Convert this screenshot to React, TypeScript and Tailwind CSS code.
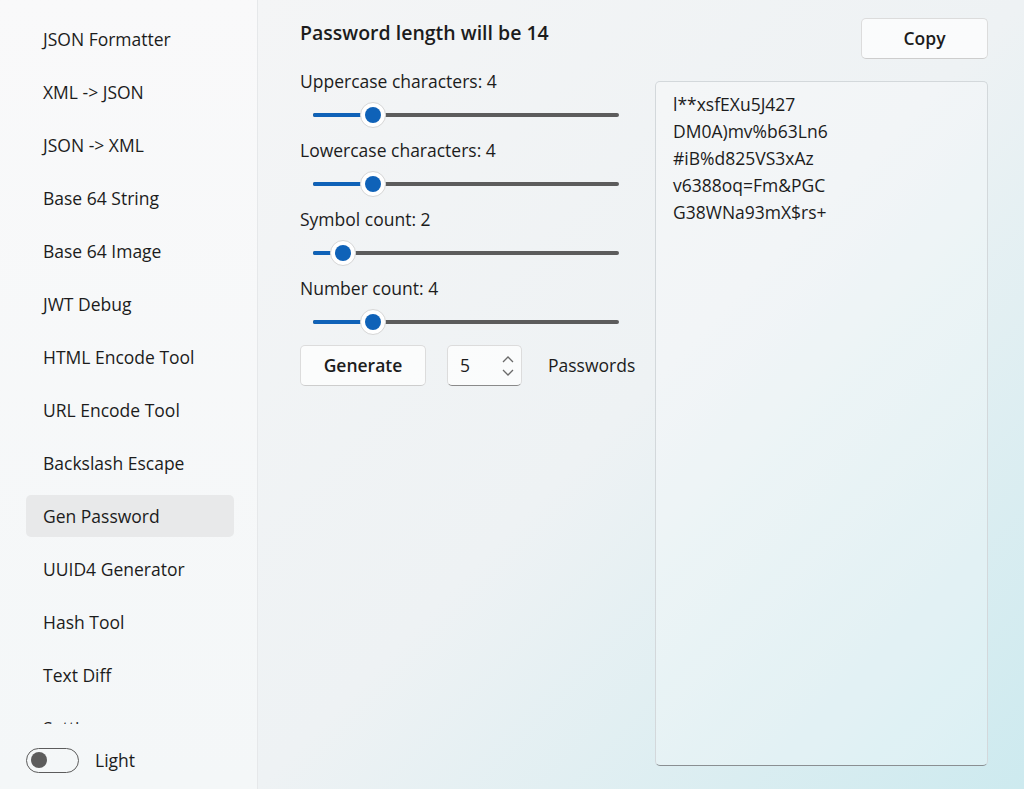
import React from "react";

const font = { fontFamily: '"Segoe UI", "Open Sans", "Noto Sans", sans-serif' };

const navItems = [
  "JSON Formatter",
  "XML -> JSON",
  "JSON -> XML",
  "Base 64 String",
  "Base 64 Image",
  "JWT Debug",
  "HTML Encode Tool",
  "URL Encode Tool",
  "Backslash Escape",
  "Gen Password",
  "UUID4 Generator",
  "Hash Tool",
  "Text Diff",
  "Settings",
];

const sliders = [
  { label: "Uppercase characters", value: 4 },
  { label: "Lowercase characters", value: 4 },
  { label: "Symbol count", value: 2 },
  { label: "Number count", value: 4 },
];

const passwords = [
  "l**xsfEXu5J427",
  "DM0A)mv%b63Ln6",
  "#iB%d825VS3xAz",
  "v6388oq=Fm&PGC",
  "G38WNa93mX$rs+",
];

function Slider({ value }: { value: number }) {
  const pos = value * 15;
  return (
    <div className="relative h-[30px] w-[320px]">
      <div className="absolute left-[13px] top-[13px] h-[4px] w-[306px] rounded-full bg-[#5c5c5c]" />
      <div
        className="absolute left-[13px] top-[13px] h-[4px] rounded-full bg-[#0f62b8]"
        style={{ width: pos }}
      />
      <div
        className="absolute top-[2px] flex h-[26px] w-[26px] items-center justify-center rounded-full border border-[#d6d6d6] bg-white"
        style={{ left: pos }}
      >
        <div className="h-[16px] w-[16px] rounded-full bg-[#0f62b8]" />
      </div>
    </div>
  );
}

export default function App() {
  return (
    <div
      className="flex h-[789px] w-[1024px] overflow-hidden text-[#1c1c1c]"
      style={font}
    >
      <aside className="flex h-full w-[258px] shrink-0 flex-col border-r border-[#e6e8ea] bg-linear-to-b from-[#f9f9fa] to-[#f4f7f8]">
        <div className="h-[724px] overflow-hidden pt-[18px]">
          <div className="flex flex-col gap-[11px] pl-[26px] pr-[23px]">
            {navItems.map((item) => (
              <div
                key={item}
                className={`flex h-[42px] items-center rounded-[5px] pl-[17px] text-[17.5px] ${
                  item === "Gen Password" ? "bg-[#e8e9ea]" : ""
                }`}
              >
                {item}
              </div>
            ))}
          </div>
        </div>
        <div className="flex items-center gap-[16px] pl-[26px] pt-[23px]">
          <div className="flex h-[25px] w-[53px] items-center rounded-full border-[1.5px] border-[#5c5c5c] px-[4px]">
            <div className="h-[16px] w-[16px] rounded-full bg-[#5c5c5c]" />
          </div>
          <span className="text-[17.5px]">Light</span>
        </div>
      </aside>

      <main className="flex flex-1 bg-linear-to-br from-[#f4f5f6] via-[#eef2f4] to-[#cdeaef] pl-[42px] pr-[37px]">
        <div className="flex w-[355px] flex-col">
          <div className="pt-[20px] text-[19.5px] font-semibold leading-[26px]">
            Password length will be 14
          </div>
          <div className="mt-[22px] flex flex-col">
            {sliders.map((s) => (
              <div key={s.label} className="flex h-[69px] flex-col">
                <div className="h-[26px] text-[17.5px] leading-[26px]">
                  {s.label}: {s.value}
                </div>
                <div className="mt-[6px]">
                  <Slider value={s.value} />
                </div>
              </div>
            ))}
          </div>
          <div className="mt-[1px] flex items-center">
            <button className="h-[41px] w-[126px] rounded-[5px] border border-[#dcdcdc] border-b-[#cdcdcd] bg-white/70 text-[17.5px] font-semibold">
              Generate
            </button>
            <div className="ml-[21px] flex h-[41px] w-[75px] items-center justify-between rounded-[5px] border border-[#dcdcdc] border-b-[#8a8a8a] bg-white/70 pl-[12px] pr-[6px]">
              <span className="text-[17.5px]">5</span>
              <div className="flex flex-col items-center text-[#6a6a6a]">
                <svg width="14" height="10" viewBox="0 0 14 10">
                  <path d="M2 7 L7 2 L12 7" fill="none" stroke="currentColor" strokeWidth="1.3" />
                </svg>
                <svg width="14" height="10" viewBox="0 0 14 10" className="mt-[2px]">
                  <path d="M2 3 L7 8 L12 3" fill="none" stroke="currentColor" strokeWidth="1.3" />
                </svg>
              </div>
            </div>
            <span className="ml-[26px] text-[17.5px]">Passwords</span>
          </div>
        </div>

        <div className="ml-auto flex w-[333px] flex-col items-end">
          <button className="mt-[18px] h-[41px] w-[127px] rounded-[5px] border border-[#dcdcdc] border-b-[#cdcdcd] bg-white/70 text-[17.5px] font-semibold">
            Copy
          </button>
          <div className="mt-[22px] h-[685px] w-[333px] rounded-[5px] border border-[#d3d8db] border-b-[#8a8f92] bg-white/25 pl-[17px] pt-[9px] text-[17.5px] leading-[27px]">
            {passwords.map((p) => (
              <div key={p}>{p}</div>
            ))}
          </div>
        </div>
      </main>
    </div>
  );
}
